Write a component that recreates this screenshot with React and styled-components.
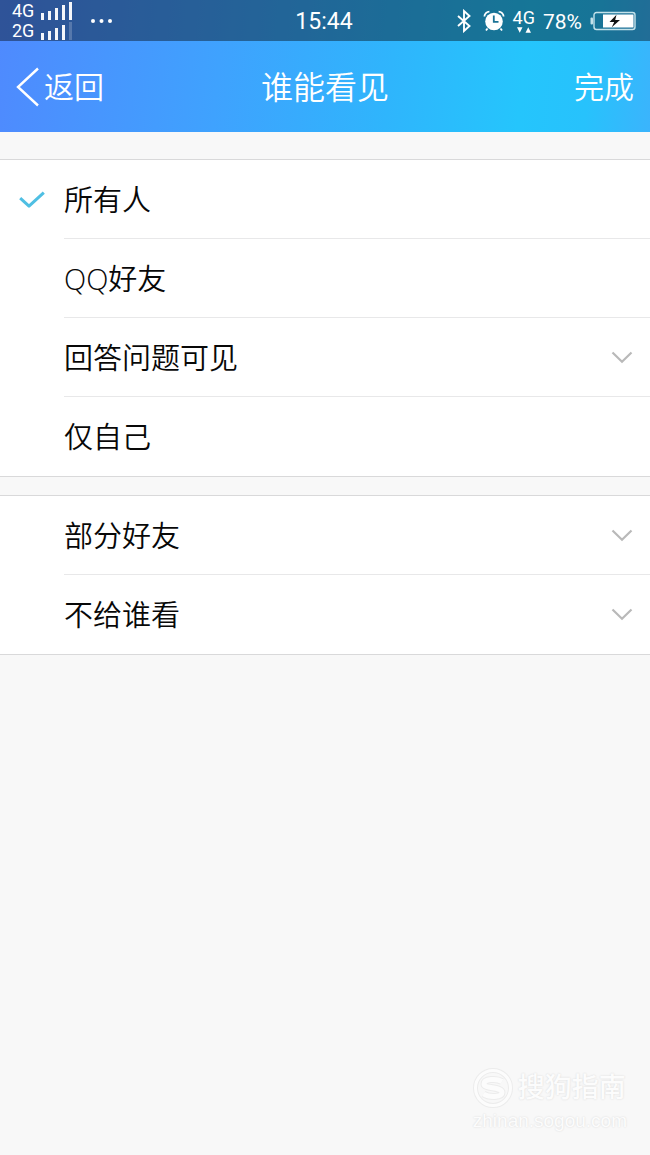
import { useState } from "react";
import styled, { createGlobalStyle } from "styled-components";

const COLORS = {
  page: "#f8f8f8",
  text: "#080808",
  line: "#d9d9da",
  divider: "#e8e8e9",
  check: "#4fbfe3",
  chevron: "#b9b9b9",
};

const AUDIENCES = [
  [
    { id: "everyone", label: "所有人" },
    { id: "friends", label: "QQ好友" },
    { id: "question", label: "回答问题可见", expandable: true },
    { id: "self", label: "仅自己" },
  ],
  [
    { id: "some", label: "部分好友", expandable: true },
    { id: "except", label: "不给谁看", expandable: true },
  ],
];

export default function App() {
  const [audience, setAudience] = useState("everyone");

  return (
    <>
      <GlobalStyle />
      <Page>
        <Header>
          <StatusBar />
          <NavBar>
            <BackButton type="button">
              <BackIcon />
              返回
            </BackButton>
            <Title>谁能看见</Title>
            <DoneButton type="button">完成</DoneButton>
          </NavBar>
        </Header>
        <Main>
          {AUDIENCES.map((options) => (
            <Group key={options[0].id}>
              {options.map((option) => (
                <Option
                  key={option.id}
                  option={option}
                  checked={audience === option.id}
                  onSelect={setAudience}
                />
              ))}
            </Group>
          ))}
        </Main>
        <Watermark>
          <Brand>
            <BrandLogo />
            搜狗指南
          </Brand>
          <Site>zhinan.sogou.com</Site>
        </Watermark>
      </Page>
    </>
  );
}

function Option({ option, checked, onSelect }) {
  return (
    <Row>
      <Mark>
        <Radio
          type="radio"
          name="audience"
          value={option.id}
          checked={checked}
          onChange={() => onSelect(option.id)}
        />
        {checked && <CheckIcon />}
      </Mark>
      <RowBody>
        <RowLabel>{option.label}</RowLabel>
        {option.expandable && <ChevronIcon />}
      </RowBody>
    </Row>
  );
}

function StatusBar() {
  return (
    <Status>
      <StatusSide>
        <Networks>
          <Network>
            4G
            <SignalIcon bars={5} />
          </Network>
          <Network>
            2G
            <SignalIcon bars={4} />
          </Network>
        </Networks>
        <DotsIcon />
      </StatusSide>
      <Clock>15:44</Clock>
      <StatusSide $end>
        <BluetoothIcon />
        <AlarmIcon />
        <DataLink>
          4G
          <DataArrows />
        </DataLink>
        <Percent>78%</Percent>
        <BatteryIcon />
      </StatusSide>
    </Status>
  );
}

/* icons */

function SignalIcon({ bars }) {
  return (
    <svg width="34" height="19" viewBox="0 0 34 19" fill="#fff" aria-hidden="true">
      {[7, 9, 12, 15, 18].map((height, i) => (
        <rect
          key={height}
          x={1 + i * 7}
          y={19 - height}
          width="3"
          height={height}
          opacity={i < bars ? 0.95 : 0.2}
        />
      ))}
    </svg>
  );
}

function DotsIcon() {
  return (
    <svg width="24" height="6" viewBox="0 0 24 6" fill="#fff" aria-hidden="true">
      <circle cx="3" cy="3" r="2" />
      <circle cx="11.5" cy="3" r="2" />
      <circle cx="20" cy="3" r="2" />
    </svg>
  );
}

function BluetoothIcon() {
  return (
    <svg width="18" height="24" viewBox="0 0 18 24" fill="none" stroke="#fff" strokeWidth="1.9" aria-hidden="true">
      <path d="M1 7 L12.5 17 L7 22 V2 L12.5 7 L1 17" />
    </svg>
  );
}

function AlarmIcon() {
  return (
    <svg width="22" height="22" viewBox="0 0 22 22" fill="none" aria-hidden="true">
      <circle cx="11" cy="11.5" r="8.8" fill="#fff" />
      <path d="M1.4 6.6 A5 5 0 0 1 6.4 1.6 M15.6 1.6 A5 5 0 0 1 20.6 6.6" stroke="#fff" strokeWidth="1.8" />
      <path d="M4.5 18.5 L3 20.5 M17.5 18.5 L19 20.5" stroke="#fff" strokeWidth="1.8" />
      <path d="M10.8 5.5 V11.8 H15.5" stroke="#1b7396" strokeWidth="1.8" />
    </svg>
  );
}

function DataArrows() {
  return (
    <svg width="16" height="6" viewBox="0 0 16 6" fill="#fff" aria-hidden="true">
      <path d="M1 0.3 H6.5 L3.75 5.7 Z M9.5 5.7 H15 L12.25 0.3 Z" />
    </svg>
  );
}

function BatteryIcon() {
  return (
    <svg width="46" height="20" viewBox="0 0 46 20" fill="none" aria-hidden="true">
      <rect x="4" y="1.5" width="41" height="17" rx="2.5" stroke="#c4e2ea" strokeWidth="1.4" />
      <rect x="0.5" y="6.5" width="2.5" height="7" rx="1" fill="#c4e2ea" />
      <rect x="13" y="3.5" width="30.5" height="13" fill="#fff" />
      <path d="M26.5 3.8 L19.5 11 H24.2 L21.8 16.2 L30 9 H25.2 Z" fill="#111" />
    </svg>
  );
}

function BackIcon() {
  return (
    <svg width="24" height="40" viewBox="0 0 24 40" fill="none" stroke="#fff" strokeWidth="2.4" aria-hidden="true">
      <path d="M22 1.5 L2 20 L22 38.5" />
    </svg>
  );
}

function CheckIcon() {
  return (
    <svg width="26" height="18" viewBox="0 0 26 18" fill="none" stroke={COLORS.check} strokeWidth="3" aria-hidden="true">
      <path d="M1.2 7.2 L10 15.2 L24.8 1.6" strokeLinejoin="round" />
    </svg>
  );
}

function ChevronIcon() {
  return (
    <svg width="22" height="13" viewBox="0 0 22 13" fill="none" stroke={COLORS.chevron} strokeWidth="2.2" aria-hidden="true">
      <path d="M1.5 1.5 L11 10.8 L20.5 1.5" />
    </svg>
  );
}

function BrandLogo() {
  return (
    <svg width="40" height="40" viewBox="0 0 40 40" fill="none" aria-hidden="true">
      <circle cx="20" cy="20" r="17.5" stroke="#ececec" strokeWidth="5" />
      <circle cx="20" cy="20" r="17.5" stroke="#fcfcfc" strokeWidth="3" />
      <path
        d="M29 13.5 C24 10.5 11 10.5 11 16 C11 21 29 18.5 29 24.5 C29 29.5 16 29.5 10.5 26"
        stroke="#ececec"
        strokeWidth="7"
      />
      <path
        d="M29 13.5 C24 10.5 11 10.5 11 16 C11 21 29 18.5 29 24.5 C29 29.5 16 29.5 10.5 26"
        stroke="#fcfcfc"
        strokeWidth="5"
      />
    </svg>
  );
}

/* styles */

const GlobalStyle = createGlobalStyle`
  *, *::before, *::after {
    box-sizing: border-box;
  }

  body {
    margin: 0;
    background-color: ${COLORS.page};
    color: ${COLORS.text};
    font-family: "Open Sans", "Noto Sans CJK SC", sans-serif;
    font-weight: 350;
  }
`;

const Page = styled.div`
  display: flex;
  flex-direction: column;
  min-height: 100vh;
`;

const Header = styled.header`
  color: white;
  background: linear-gradient(
    96deg,
    #4f8afe 0%,
    #3fa2fe 34%,
    #2fb5fc 60%,
    #25c5fc 80%,
    #27c2fc 90%,
    #3bb4fc 100%
  );
`;

const Status = styled.div`
  display: grid;
  grid-template-columns: 1fr auto 1fr;
  align-items: center;
  height: 41px;
  padding: 0 14px 0 12px;
  background-color: rgba(0, 0, 0, 0.4);
  font-family: Roboto, sans-serif;
  font-weight: 400;
`;

const StatusSide = styled.div`
  display: flex;
  align-items: center;
  justify-content: ${(props) => (props.$end ? "flex-end" : "flex-start")};
  gap: ${(props) => (props.$end ? "8px" : "16px")};
`;

const Networks = styled.div`
  display: flex;
  flex-direction: column;
`;

const Network = styled.div`
  display: flex;
  align-items: center;
  gap: 6px;
  height: 20px;
  font-size: 18px;
  line-height: 20px;
`;

const Clock = styled.time`
  padding-top: 2px;
  font-size: 23px;
`;

const DataLink = styled.div`
  display: flex;
  flex-direction: column;
  align-items: center;
  font-size: 18px;
  line-height: 18px;
`;

const Percent = styled.span`
  padding-top: 2px;
  font-size: 21px;
`;

const NavBar = styled.nav`
  display: grid;
  grid-template-columns: 1fr auto 1fr;
  align-items: center;
  height: 91px;
  padding: 0 16px;
`;

const NavButton = styled.button`
  display: flex;
  align-items: center;
  padding: 0;
  border: none;
  background: none;
  color: inherit;
  font: inherit;
  font-size: 30px;
  line-height: 40px;
  cursor: pointer;
`;

const BackButton = styled(NavButton)`
  justify-self: start;
  gap: 4px;
`;

const DoneButton = styled(NavButton)`
  justify-self: end;
`;

const Title = styled.h1`
  margin: 0;
  font-size: 32px;
  font-weight: inherit;
  line-height: 40px;
`;

const Main = styled.main`
  display: flex;
  flex: 1;
  flex-direction: column;
  gap: 18px;
  padding-top: 27px;
`;

const Group = styled.div`
  border-top: 1px solid ${COLORS.line};
  border-bottom: 1px solid ${COLORS.line};
  background-color: white;
`;

const RowBody = styled.span`
  display: flex;
  flex: 1;
  align-items: center;
  justify-content: space-between;
  padding-right: 17px;
  border-bottom: 1px solid ${COLORS.divider};
`;

const RowLabel = styled.span`
  padding-bottom: 3px;
`;

const Row = styled.label`
  display: flex;
  height: 79px;
  font-size: 29px;
  cursor: pointer;

  /* the group already draws the line under its last row */
  &:last-child ${RowBody} {
    border-bottom: none;
  }
`;

const Mark = styled.span`
  display: grid;
  place-items: center;
  width: 64px;

  > * {
    grid-area: 1 / 1;
  }
`;

// still focusable, the check icon is drawn over it
const Radio = styled.input`
  width: 24px;
  height: 24px;
  margin: 0;
  opacity: 0;
`;

const Watermark = styled.footer`
  align-self: flex-end;
  padding: 0 23px 21px 0;
  color: #fcfcfc;
  font-family: "Liberation Sans", "Noto Sans CJK SC", sans-serif;
  font-weight: 500;
  text-shadow: 0 0 2px #d6d6d6;
`;

const Brand = styled.div`
  display: flex;
  align-items: center;
  gap: 5px;
  font-size: 27px;
  line-height: 40px;
`;

const Site = styled.div`
  font-size: 19px;
  line-height: 26px;
`;
